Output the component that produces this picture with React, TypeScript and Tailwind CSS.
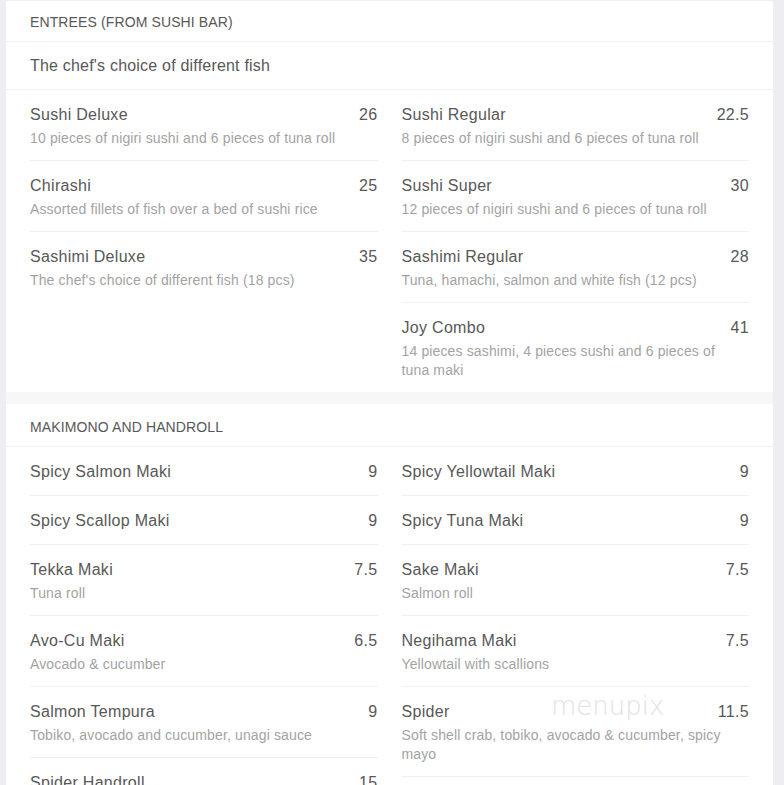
type Item = { name: string; price: string; desc?: string };

const entreesLeft: Item[] = [
  { name: "Sushi Deluxe", price: "26", desc: "10 pieces of nigiri sushi and 6 pieces of tuna roll" },
  { name: "Chirashi", price: "25", desc: "Assorted fillets of fish over a bed of sushi rice" },
  { name: "Sashimi Deluxe", price: "35", desc: "The chef's choice of different fish (18 pcs)" },
];

const entreesRight: Item[] = [
  { name: "Sushi Regular", price: "22.5", desc: "8 pieces of nigiri sushi and 6 pieces of tuna roll" },
  { name: "Sushi Super", price: "30", desc: "12 pieces of nigiri sushi and 6 pieces of tuna roll" },
  { name: "Sashimi Regular", price: "28", desc: "Tuna, hamachi, salmon and white fish (12 pcs)" },
  { name: "Joy Combo", price: "41", desc: "14 pieces sashimi, 4 pieces sushi and 6 pieces of tuna maki" },
];

const makiLeft: Item[] = [
  { name: "Spicy Salmon Maki", price: "9" },
  { name: "Spicy Scallop Maki", price: "9" },
  { name: "Tekka Maki", price: "7.5", desc: "Tuna roll" },
  { name: "Avo-Cu Maki", price: "6.5", desc: "Avocado & cucumber" },
  { name: "Salmon Tempura", price: "9", desc: "Tobiko, avocado and cucumber, unagi sauce" },
  { name: "Spider Handroll", price: "15", desc: "Soft shell crab, tobiko, avocado & cucumber" },
];

const makiRight: Item[] = [
  { name: "Spicy Yellowtail Maki", price: "9" },
  { name: "Spicy Tuna Maki", price: "9" },
  { name: "Sake Maki", price: "7.5", desc: "Salmon roll" },
  { name: "Negihama Maki", price: "7.5", desc: "Yellowtail with scallions" },
  { name: "Spider", price: "11.5", desc: "Soft shell crab, tobiko, avocado & cucumber, spicy mayo" },
  { name: "Rainbow Roll", price: "14", desc: "California roll topped with assorted fish" },
];

const MenuItem = ({ item, last }: { item: Item; last: boolean }) => (
  <div className={`pt-[14px] pb-[12px] ${last ? "" : "border-b border-[#f0f0f0]"}`}>
    <div className="flex items-start justify-between gap-4 text-[16px] leading-[22px] tracking-[0.3px] text-[#585858]">
      <span>{item.name}</span>
      <span>{item.price}</span>
    </div>
    {item.desc && (
      <p className="mt-[3px] pr-6 text-[14px] leading-[19px] tracking-[0.14px] text-[#a3a3a3]">
        {item.desc}
      </p>
    )}
  </div>
);

const Column = ({ items }: { items: Item[] }) => (
  <div className="flex flex-col">
    {items.map((it, i) => (
      <MenuItem key={it.name} item={it} last={i === items.length - 1} />
    ))}
  </div>
);

const Section = ({
  title,
  intro,
  headerClass,
  left,
  right,
}: {
  title: string;
  intro?: string;
  headerClass: string;
  left: Item[];
  right: Item[];
}) => (
  <section className="bg-white">
    <div
      className={`flex items-center border-b border-[#f0f0f0] px-6 text-[14px] uppercase tracking-[0.12px] text-[#585858] ${headerClass}`}
    >
      {title}
    </div>
    {intro && (
      <div className="flex h-[48px] items-center border-b border-[#f0f0f0] px-6 text-[16px] tracking-[0.2px] text-[#585858]">
        {intro}
      </div>
    )}
    <div className="grid grid-cols-2 items-start gap-x-6 px-6">
      <Column items={left} />
      <Column items={right} />
    </div>
  </section>
);

export default function App() {
  return (
    <div
      className="relative h-[785px] overflow-hidden bg-[#ededf2] pl-[6px] pr-[11px] pt-[1px]"
      style={{ fontFamily: '"Liberation Sans", Arial, sans-serif' }}
    >
      <div className="flex flex-col gap-[12px] bg-[#f7f7f7]">
        <Section
          title="Entrees (from Sushi Bar)"
          intro="The chef's choice of different fish"
          headerClass="h-[41px] pt-[2px]"
          left={entreesLeft}
          right={entreesRight}
        />
        <Section
          title="Makimono and Handroll"
          headerClass="h-[43px] pt-[5px]"
          left={makiLeft}
          right={makiRight}
        />
      </div>
      <span
        className="pointer-events-none absolute left-[551px] top-[687px] text-[26px] font-light text-[#e2e2e2]"
        style={{ fontFamily: '"DejaVu Sans", sans-serif' }}
      >
        menupix
      </span>
    </div>
  );
}
